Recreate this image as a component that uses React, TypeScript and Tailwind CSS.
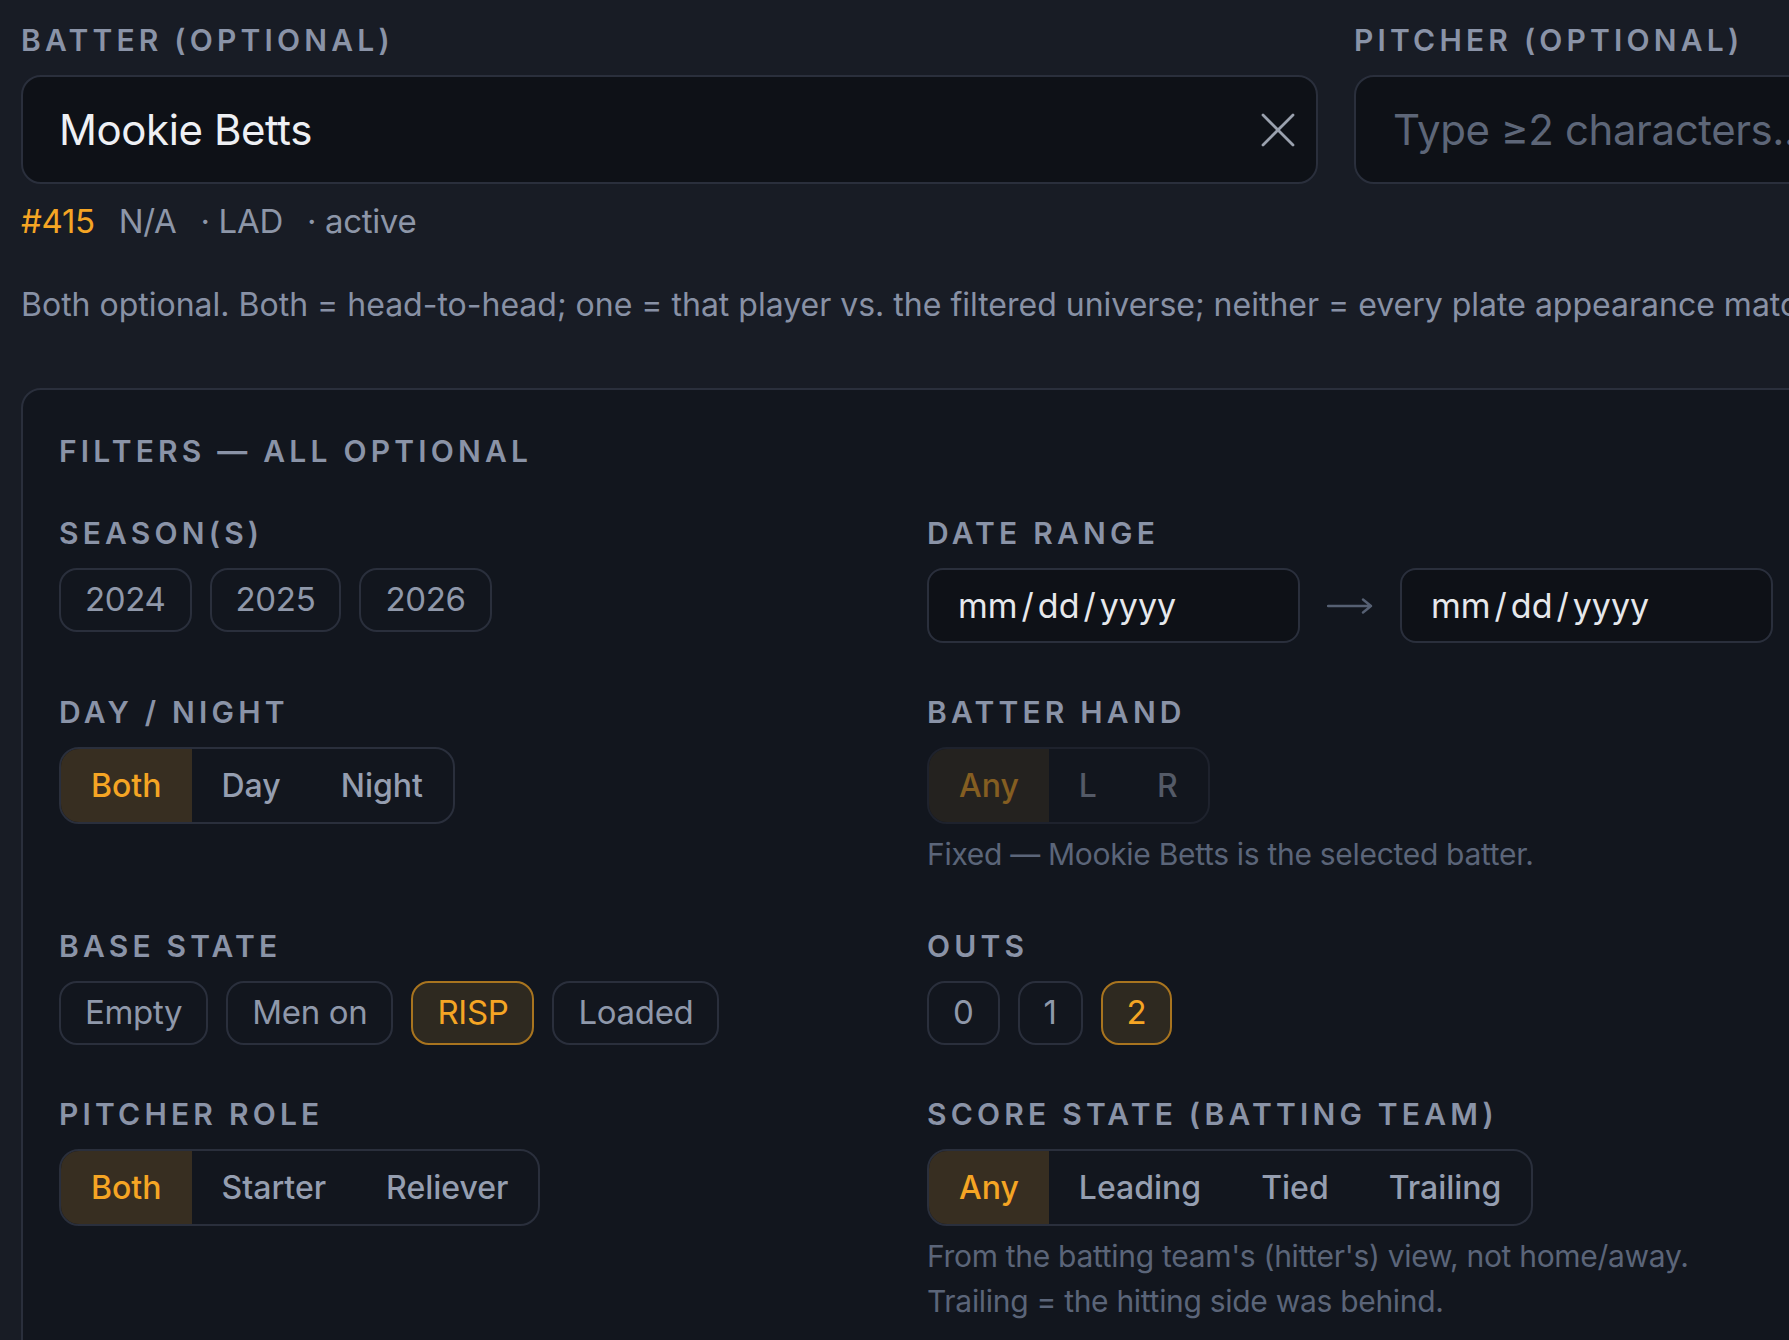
import React from "react";

const font = { fontFamily: "Inter, 'Noto Sans', sans-serif" };

function Label({ children }: { children: React.ReactNode }) {
  return (
    <div className="text-[30px] leading-[36px] font-semibold uppercase tracking-[0.14em] text-[#8a93a7] whitespace-nowrap">
      {children}
    </div>
  );
}

function Chip({ label, active = false }: { label: string; active?: boolean }) {
  return (
    <div
      className={
        "h-[64px] px-[24px] rounded-[18px] border-2 flex items-center text-[33px] tracking-[-0.01em] " +
        (active
          ? "border-[#a8741f] bg-[#2e2920] text-[#f5a524]"
          : "border-[#2a2f3c] bg-[#12161e] text-[#8f98aa]")
      }
    >
      {label}
    </div>
  );
}

function Segmented({
  items,
  active,
  dim = false,
}: {
  items: string[];
  active: number;
  dim?: boolean;
}) {
  return (
    <div
      className={
        "inline-flex h-[77px] rounded-[20px] border-2 border-[#2a2f3c] overflow-hidden self-start " +
        (dim ? "opacity-50" : "")
      }
    >
      {items.map((it, i) => (
        <div
          key={it}
          className={
            "px-[30px] flex items-center text-[32px] font-medium " +
            (i === active ? "bg-[#372e21] text-[#f5a524]" : "text-[#959eb0]")
          }
        >
          {it}
        </div>
      ))}
    </div>
  );
}

function Field({ label, children }: { label: string; children: React.ReactNode }) {
  return (
    <div className="flex flex-col">
      <Label>{label}</Label>
      <div className="mt-[17px] flex flex-col">{children}</div>
    </div>
  );
}

function Note({ children }: { children: React.ReactNode }) {
  return (
    <div className="mt-[8px] text-[30px] leading-[45px] tracking-[-0.01em] text-[#5b6579] whitespace-nowrap">
      {children}
    </div>
  );
}

function DateBox() {
  return (
    <div className="w-[373px] h-[75px] shrink-0 rounded-[16px] border-2 border-[#2a2f3c] bg-[#0e1117] flex items-center pl-[29px] text-[34px] text-[#e6e8ec]">
      <span>mm</span>
      <span className="mx-[4px]">/</span>
      <span>dd</span>
      <span className="mx-[4px]">/</span>
      <span>yyyy</span>
    </div>
  );
}

export default function App() {
  return (
    <div className="w-[1789px] h-[1340px] overflow-hidden bg-[#181c25]" style={font}>
      <div className="w-[2700px] pl-[21px] pt-[22px]">
        <div className="grid grid-cols-[1297px_1297px] gap-x-[36px]">
          <div className="flex flex-col">
            <Label>Batter (optional)</Label>
            <div className="mt-[17px] h-[109px] rounded-[20px] border-2 border-[#2a2f3c] bg-[#0e1117] flex items-center pl-[36px] pr-[21px]">
              <span className="flex-1 text-[42px] tracking-[-0.01em] text-[#eef0f4]">Mookie Betts</span>
              <svg width="34" height="34" viewBox="0 0 34 34" className="text-[#9aa1ae]">
                <path d="M2 2 L32 32 M32 2 L2 32" stroke="currentColor" strokeWidth="2.8" strokeLinecap="round" />
              </svg>
            </div>
          </div>
          <div className="flex flex-col">
            <Label>Pitcher (optional)</Label>
            <div className="mt-[17px] h-[109px] rounded-[20px] border-2 border-[#2a2f3c] bg-[#0e1117] flex items-center pl-[37px]">
              <span className="text-[42px] tracking-[-0.01em] text-[#5d6678] whitespace-nowrap">Type ≥2 characters...</span>
            </div>
          </div>
        </div>

        <div className="mt-[13px] flex items-center gap-[24px] text-[33px] leading-[49px] tracking-[-0.01em] text-[#8d96a8]">
          <span className="text-[#f5a524]">#415</span>
          <span>N/A</span>
          <span>· LAD</span>
          <span>· active</span>
        </div>

        <div className="mt-[35px] text-[32px] leading-[48px] text-[#8891a5] whitespace-nowrap">
          Both optional. Both = head-to-head; one = that player vs. the filtered universe; neither = every plate appearance matching the filters.
        </div>

        <div className="mt-[59px] w-[2630px] h-[1200px] rounded-[20px] border-2 border-[#2a2f3c] bg-[#12161e] pt-[43px] px-[36px]">
          <Label>Filters — all optional</Label>
          <div className="mt-[46px] grid grid-cols-[830px_830px] gap-x-[38px] gap-y-[51px] items-start">
            <Field label="Season(s)">
              <div className="flex gap-[18px]">
                <Chip label="2024" />
                <Chip label="2025" />
                <Chip label="2026" />
              </div>
            </Field>
            <Field label="Date range">
              <div className="flex items-center gap-[27px]">
                <DateBox />
                <svg width="46" height="20" viewBox="0 0 46 20" className="text-[#566073] shrink-0">
                  <path d="M1 10 H44 M36 3.5 L44 10 L36 16.5" stroke="currentColor" strokeWidth="2.4" fill="none" strokeLinecap="round" strokeLinejoin="round" />
                </svg>
                <DateBox />
              </div>
            </Field>

            <Field label="Day / Night">
              <Segmented items={["Both", "Day", "Night"]} active={0} />
            </Field>
            <Field label="Batter hand">
              <Segmented items={["Any", "L", "R"]} active={0} dim />
              <Note>Fixed — Mookie Betts is the selected batter.</Note>
            </Field>

            <Field label="Base state">
              <div className="flex gap-[18px]">
                <Chip label="Empty" />
                <Chip label="Men on" />
                <Chip label="RISP" active />
                <Chip label="Loaded" />
              </div>
            </Field>
            <Field label="Outs">
              <div className="flex gap-[18px]">
                <Chip label="0" />
                <Chip label="1" />
                <Chip label="2" active />
              </div>
            </Field>

            <Field label="Pitcher role">
              <Segmented items={["Both", "Starter", "Reliever"]} active={0} />
            </Field>
            <Field label="Score state (batting team)">
              <Segmented items={["Any", "Leading", "Tied", "Trailing"]} active={0} />
              <Note>
                From the batting team's (hitter's) view, not home/away.
                <br />
                Trailing = the hitting side was behind.
              </Note>
            </Field>
          </div>
        </div>
      </div>
    </div>
  );
}
